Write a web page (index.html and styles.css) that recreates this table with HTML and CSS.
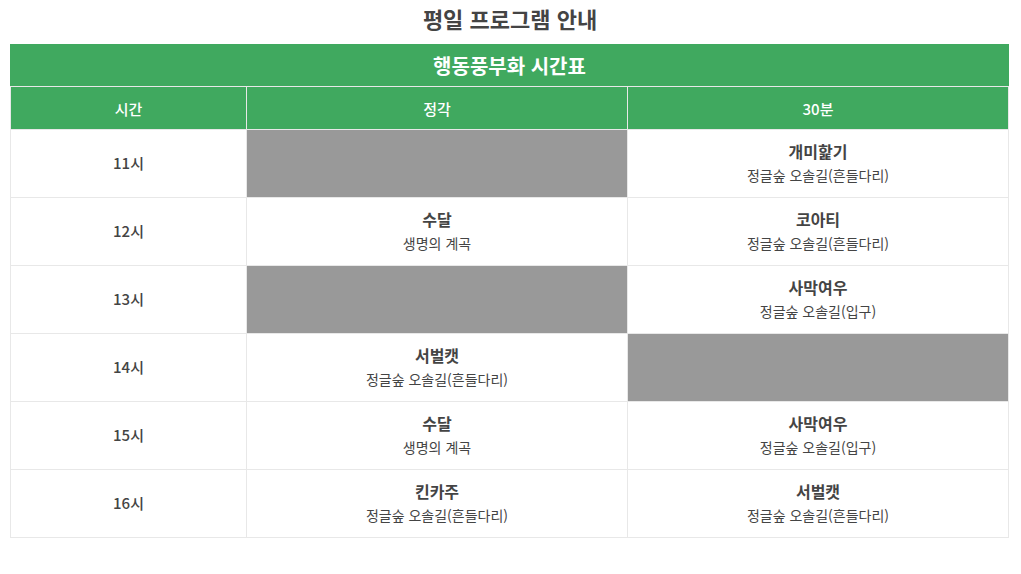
FILE: index.html
```html
<!DOCTYPE html>
<html lang="ko">
<head>
<meta charset="utf-8">
<link rel="stylesheet" href="styles.css">
</head>
<body>
<div class="wrap">
  <h2 class="page-title">평일 프로그램 안내</h2>
  <table class="schedule">
    <colgroup>
      <col class="c-time">
      <col class="c-main">
      <col class="c-main">
    </colgroup>
    <thead>
      <tr><th colspan="3" class="caption">행동풍부화 시간표</th></tr>
      <tr class="head"><th>시간</th><th>정각</th><th>30분</th></tr>
    </thead>
    <tbody>
      <tr>
        <td class="hour">11시</td>
        <td class="empty"></td>
        <td><div class="name">개미핥기</div><div class="place">정글숲 오솔길(흔들다리)</div></td>
      </tr>
      <tr>
        <td class="hour">12시</td>
        <td><div class="name">수달</div><div class="place">생명의 계곡</div></td>
        <td><div class="name">코아티</div><div class="place">정글숲 오솔길(흔들다리)</div></td>
      </tr>
      <tr>
        <td class="hour">13시</td>
        <td class="empty"></td>
        <td><div class="name">사막여우</div><div class="place">정글숲 오솔길(입구)</div></td>
      </tr>
      <tr>
        <td class="hour">14시</td>
        <td><div class="name">서벌캣</div><div class="place">정글숲 오솔길(흔들다리)</div></td>
        <td class="empty"></td>
      </tr>
      <tr>
        <td class="hour">15시</td>
        <td><div class="name">수달</div><div class="place">생명의 계곡</div></td>
        <td><div class="name">사막여우</div><div class="place">정글숲 오솔길(입구)</div></td>
      </tr>
      <tr>
        <td class="hour">16시</td>
        <td><div class="name">킨카주</div><div class="place">정글숲 오솔길(흔들다리)</div></td>
        <td><div class="name">서벌캣</div><div class="place">정글숲 오솔길(흔들다리)</div></td>
      </tr>
    </tbody>
  </table>
</div>
</body>
</html>
```

FILE: styles.css
```css
html, body {
  margin: 0;
  padding: 0;
  background: #fff;
}
body {
  font-family: "Noto Sans CJK KR", "Noto Sans", sans-serif;
  color: #444;
}
.wrap {
  padding: 0 11px 0 10px;
}
.page-title {
  margin: 0;
  height: 44px;
  padding-top: 3px;
  box-sizing: border-box;
  font-size: 22px;
  line-height: 30px;
  font-weight: 700;
  text-align: center;
  color: #444;
}
.schedule {
  width: 999px;
  border-collapse: collapse;
  table-layout: fixed;
}
.c-time { width: 236px; }
.c-main { width: 381px; }
.schedule th {
  background: #40a95f;
  color: #fff;
  border: 1px solid #e8e8e8;
  font-weight: 700;
  text-align: center;
  padding: 0;
}
.schedule .caption {
  height: 42px;
  font-size: 20px;
  border-top: none;
  border-left-color: #40a95f;
  border-right-color: #40a95f;
}
.schedule .head th {
  height: 42px;
  font-size: 15px;
  font-weight: 500;
}
.schedule td {
  border: 1px solid #e8e8e8;
  height: 64px;
  text-align: center;
  vertical-align: middle;
  padding: 0 0 3px;
}
.schedule td.hour {
  font-size: 15px;
  font-weight: 500;
}
.schedule td.empty {
  background: #999;
}
.name {
  font-size: 16px;
  font-weight: 700;
  line-height: 24px;
}
.place {
  font-size: 14px;
  line-height: 22px;
  margin-top: 1px;
}
```
